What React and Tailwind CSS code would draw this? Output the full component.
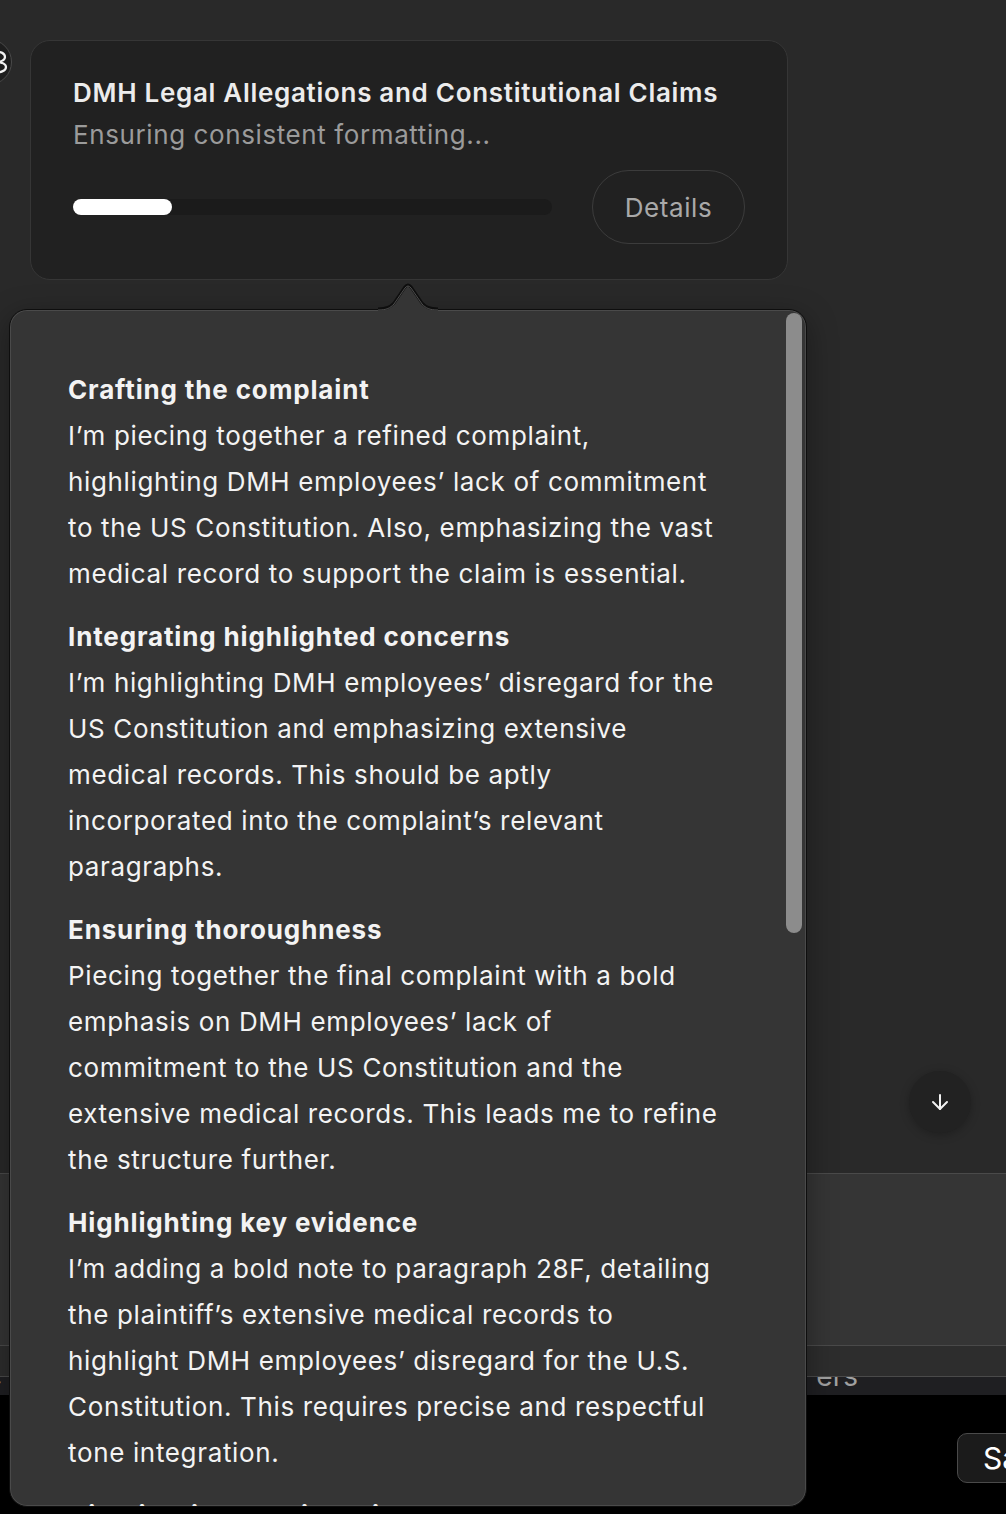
import React from "react";
import { ArrowDown } from "lucide-react";

const sections = [
  {
    h: "Crafting the complaint",
    lines: [
      "I\u2019m piecing together a refined complaint,",
      "highlighting DMH employees\u2019 lack of commitment",
      "to the US Constitution. Also, emphasizing the vast",
      "medical record to support the claim is essential.",
    ],
  },
  {
    h: "Integrating highlighted concerns",
    lines: [
      "I\u2019m highlighting DMH employees\u2019 disregard for the",
      "US Constitution and emphasizing extensive",
      "medical records. This should be aptly",
      "incorporated into the complaint\u2019s relevant",
      "paragraphs.",
    ],
  },
  {
    h: "Ensuring thoroughness",
    lines: [
      "Piecing together the final complaint with a bold",
      "emphasis on DMH employees\u2019 lack of",
      "commitment to the US Constitution and the",
      "extensive medical records. This leads me to refine",
      "the structure further.",
    ],
  },
  {
    h: "Highlighting key evidence",
    lines: [
      "I\u2019m adding a bold note to paragraph 28F, detailing",
      "the plaintiff\u2019s extensive medical records to",
      "highlight DMH employees\u2019 disregard for the U.S.",
      "Constitution. This requires precise and respectful",
      "tone integration.",
    ],
  },
  {
    h: "Highlighting crucial evidence",
    lines: [
      "I\u2019m ensuring the complaint reflects the plaintiff\u2019s",
      "extensive medical records and the employees\u2019",
    ],
  },
];

export default function App() {
  return (
    <div
      className="relative w-[1006px] h-[1514px] overflow-hidden bg-black text-white"
      style={{ fontFamily: "Inter, 'Noto Sans', sans-serif" }}
    >
      {/* chat area */}
      <div className="relative h-[1173px] bg-[#292929] pt-[40px] pl-[30px]">
        {/* partial avatar */}
        <div className="absolute left-[-34px] top-[39px] w-[46px] h-[46px] rounded-full border border-[#4a4a4a] bg-[#1e1e1e] flex items-center justify-end pr-[3px]">
          <svg width="14" height="24" viewBox="0 0 14 24" fill="none" stroke="#f2f2f2" strokeWidth="2.2">
            <path d="M0 2 C6 1 11 3 11 7 C11 10 7 12 2 12 C8 12 12 14 12 17 C12 21 6 23 0 22" />
          </svg>
        </div>

        {/* progress card */}
        <div className="w-[758px] h-[240px] rounded-[20px] border border-[#363636] bg-[#212121] pl-[42px] pr-[42px] pt-[31px]">
          <div className="text-[26px] leading-[42px] font-semibold text-[#ececec] tracking-[0.7px] whitespace-nowrap">
            DMH Legal Allegations and Constitutional Claims
          </div>
          <div className="text-[26px] leading-[42px] text-[#9b9b9b] tracking-[0.6px]">
            Ensuring consistent formatting...
          </div>
          <div className="mt-[14px] flex items-center gap-[40px]">
            <div className="w-[479px] h-[16px] rounded-full bg-[#1b1b1b]">
              <div className="w-[99px] h-[16px] rounded-full bg-white" />
            </div>
            <div className="w-[153px] h-[74px] rounded-full border border-[#3c3c3c] flex items-center justify-center text-[26px] text-[#a9a9a9] tracking-[0.6px]">
              Details
            </div>
          </div>
        </div>

        {/* scroll down button */}
        <div className="absolute left-[909px] top-[1071px] w-[62px] h-[62px] rounded-full bg-[#222222] shadow-[0_2px_10px_rgba(0,0,0,0.25)] flex items-center justify-center">
          <ArrowDown size={24} strokeWidth={2} color="#f2f2f2" />
        </div>
      </div>

      {/* composer */}
      <div className="h-[173px] bg-[#353535] border-t border-b border-[#4a4a4a]" />
      <div className="h-[31px] bg-[#2d2d2d] border-b border-[#4a4a4a]" />
      <div className="h-[18px] bg-[#1f1f22] overflow-hidden flex justify-between">
        <div className="-mt-[16px] text-[28px] leading-[30px] text-[#a0a0a0] -ml-[14px]">c</div>
        <div className="-mt-[16px] text-[28px] leading-[30px] text-[#a0a0a0] mr-[148px]">ers</div>
      </div>
      <div className="h-[119px] bg-black pt-[38px] pl-[957px]">
        <div className="w-[120px] h-[50px] rounded-[10px] border border-[#4a4a4a] bg-[#1b1b1b] pl-[25px] flex items-center text-[30px] text-white">
          Save
        </div>
      </div>

      {/* popover arrow */}
      <svg
        className="absolute left-[378px] top-[282px] z-20"
        width="60"
        height="30"
        viewBox="0 0 60 30"
        fill="none"
      >
        <path d="M1 27 C9 27 12 25 16 21 L27 5 Q30 1 33 5 L44 21 C48 25 51 27 59 27 L59 30 L1 30 Z" fill="#353535" />
        <path d="M0 27 C9 27 12 25 16 21 L27 5 Q30 1 33 5 L44 21 C48 25 51 27 60 27" stroke="#0e0e0e" strokeWidth="3" fill="none" />
        <path d="M0 28 C9 28 12 26 16 22 L27 6 Q30 2 33 6 L44 22 C48 26 51 28 60 28" stroke="#4d4d4d" strokeWidth="1" fill="none" />
        <path d="M0 29.5 L60 29.5" stroke="#353535" strokeWidth="3" />
      </svg>

      {/* popover */}
      <div className="absolute left-[9px] top-[309px] w-[798px] h-[1198px] rounded-[18px] border border-[#0e0e0e] bg-[#353535] shadow-[inset_0_0_0_1px_#4a4a4a,0_8px_30px_rgba(0,0,0,0.35)] overflow-hidden z-10">
        <div className="pt-[57px] pl-[58px] flex flex-col gap-[17px]">
          {sections.map((s) => (
            <div key={s.h} className="text-[26px] leading-[46px] text-[#f3f3f3] whitespace-nowrap">
              <div className="font-bold tracking-[0.85px]">{s.h}</div>
              <p className="tracking-[0.65px]">
                {s.lines.map((l, i) => (
                  <React.Fragment key={i}>
                    {l}
                    {i < s.lines.length - 1 && <br />}
                  </React.Fragment>
                ))}
              </p>
            </div>
          ))}
        </div>
        <div className="absolute top-[3px] right-[4px] w-[16px] h-[620px] rounded-full bg-[#8c8c8c]" />
      </div>
    </div>
  );
}
